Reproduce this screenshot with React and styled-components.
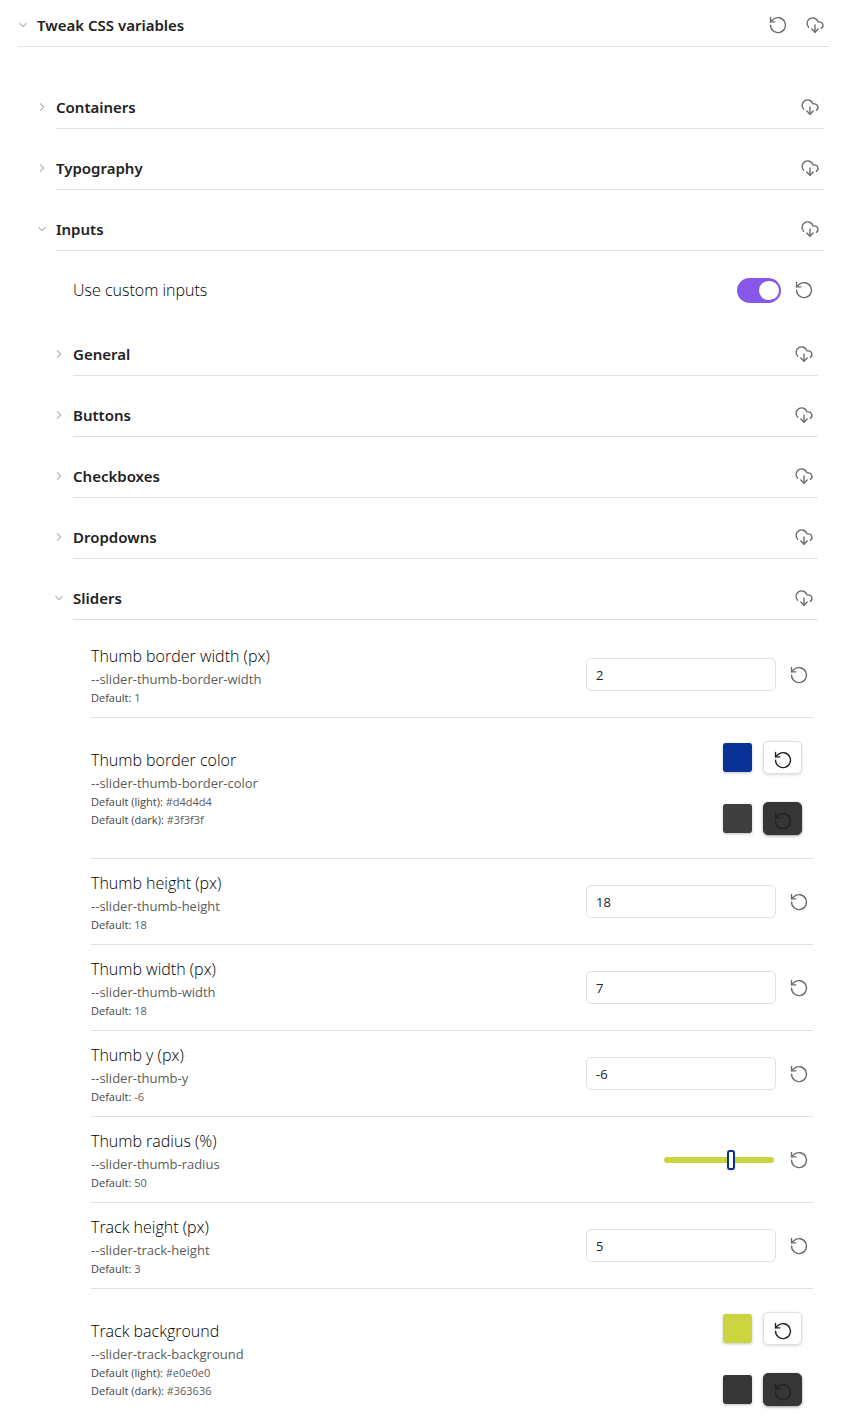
import React, { useState } from "react";
import styled, { createGlobalStyle, css } from "styled-components";
import { ChevronDown, ChevronRight } from "lucide-react";

const GlobalStyle = createGlobalStyle`
  *, *::before, *::after { box-sizing: border-box; }
  body {
    margin: 0;
    background: #fff;
    color: #222;
    font-family: "Open Sans", "Noto Sans", sans-serif;
    font-size: 16px;
    line-height: 20px;
  }
`;

const Page = styled.main`
  padding: 5px 21px 3px 18px;
`;

const Heading = styled.div`
  display: flex;
  align-items: center;
  justify-content: space-between;
  height: ${(p) => (p.$top ? 42 : 41)}px;
  margin-left: ${(p) => (p.$top ? 0 : 18)}px;
  padding: 0 4px 2px 0;
  border-bottom: 1px solid #e0e0e0;
  & + & { margin-top: 20px; }
`;

const Toggle = styled.button`
  display: flex;
  align-items: center;
  gap: 9px;
  margin: 0 0 0 ${(p) => (p.$top ? 0 : -19)}px;
  padding: 0;
  border: 0;
  background: none;
  color: #222;
  font: inherit;
  font-family: "Noto Sans", "Open Sans", sans-serif;
  font-size: 15px;
  font-weight: 600;
  svg { color: #b4b4b4; flex: none; }
`;

const Actions = styled.div`
  display: flex;
  align-items: center;
  gap: 17px;
`;

const IconButton = styled.button`
  display: flex;
  padding: 0;
  border: 0;
  background: none;
  color: #6c6c6c;
`;

const Group = styled.section`
  padding: ${(p) => p.$top || 0}px ${(p) => (p.$deep ? 6 : 5)}px 0 ${(p) => (p.$deep ? 17 : 20)}px;
`;

const SwitchRow = styled.div`
  display: flex;
  align-items: center;
  justify-content: space-between;
  height: 84px;
  padding: 0 10px 6px 35px;
`;

const Controls = styled.div`
  display: flex;
  align-items: center;
  gap: 13px;
`;

const Switch = styled.input`
  appearance: none;
  width: 44px;
  height: 25px;
  margin: 0;
  padding: 3px 2px;
  border-radius: 13px;
  background: ${(p) => (p.checked ? "#8758e8" : "#d4d4d4")};
  &::before {
    content: "";
    display: block;
    width: 20px;
    height: 19px;
    border-radius: 10px;
    background: #fff;
    margin-left: ${(p) => (p.checked ? 20 : 0)}px;
  }
`;

const Settings = styled.div`
  padding: 12px 5px 0 36px;
`;

const Setting = styled.div`
  display: flex;
  align-items: center;
  justify-content: space-between;
  min-height: ${(p) => (p.$color ? 141 : 86)}px;
  padding-right: 4px;
  border-bottom: 1px solid #e0e0e0;
  ${(p) => p.$color && css`padding-right: 11px;`}
  &:last-child { border-color: transparent; }
`;

const Info = styled.div`
  display: flex;
  flex-direction: column;
`;

const Name = styled.label`
  color: #000;
  font-weight: 300;
  line-height: 26px;
`;

const Variable = styled.span`
  color: #5c5c5c;
  font-size: 13px;
  line-height: 20px;
`;

const Default = styled.span`
  color: #5c5c5c;
  font-size: 11px;
  line-height: 18px;
  b { font-weight: 400; color: #444; }
`;

const NumberBox = styled.input`
  width: 190px;
  height: 33px;
  padding: 0 9px;
  border: 1px solid #e0e0e0;
  border-radius: 5px;
  background: #fff;
  color: #222;
  font: inherit;
  font-size: 13px;
`;

const Range = styled.input`
  appearance: none;
  width: 110px;
  height: 6px;
  margin: 0 2px 0 0;
  border-radius: 3px;
  background: #cbd53f;
  &::-webkit-slider-thumb {
    appearance: none;
    width: 8px;
    height: 20px;
    border: 2px solid #0a3196;
    border-radius: 3px;
    background: #fff;
    box-shadow: 0 1px 2px rgba(0, 0, 0, 0.15);
  }
`;

const Swatches = styled.div`
  display: flex;
  flex-direction: column;
  gap: 28px;
`;

const SwatchRow = styled.div`
  display: flex;
  align-items: center;
  gap: 11px;
`;

const Swatch = styled.input`
  appearance: none;
  width: 29px;
  height: 29px;
  padding: 0;
  border: 0;
  border-radius: 2px;
  background: none;
  box-shadow: 0 1px 3px rgba(0, 0, 0, 0.25);
  &::-webkit-color-swatch-wrapper { padding: 0; }
  &::-webkit-color-swatch { border: 0; border-radius: 2px; }
`;

const ResetBox = styled.button`
  display: flex;
  align-items: flex-end;
  justify-content: center;
  width: 39px;
  height: 33px;
  padding: 0 0 3px;
  border: 1px solid ${(p) => (p.$dark ? "#363636" : "#e0e0e0")};
  border-radius: 5px;
  background: ${(p) => (p.$dark ? "#363636" : "#fff")};
  color: #222;
  box-shadow: 0 1px 3px rgba(0, 0, 0, ${(p) => (p.$dark ? 0.4 : 0.15)});
`;

const Icon = ({ children }) => (
  <svg width="20" height="20" viewBox="-0.6 -0.6 25.2 25.2" fill="none" stroke="currentColor" strokeWidth="1.75" strokeLinecap="round" strokeLinejoin="round" aria-hidden="true">
    {children}
  </svg>
);

const ResetIcon = () => (
  <Icon>
    <path d="M2.6 12.2a9.4 9.4 0 1 0 3.1-7L2.6 8" />
    <path d="M2.6 2.6V8H8" />
  </Icon>
);

const CloudIcon = () => (
  <Icon>
    <path d="M4 14.899A7 7 0 1 1 15.71 8h1.79a4.5 4.5 0 0 1 2.5 8.242" />
    <path d="M12 12v9" />
    <path d="m8 17 4 4 4-4" />
  </Icon>
);

const Reset = ({ name }) => (
  <IconButton aria-label={`Restore default: ${name}`}><ResetIcon /></IconButton>
);

const Section = ({ title, open, top, reset }) => (
  <Heading $top={top}>
    <Toggle $top={top} aria-expanded={!!open}>
      {open ? <ChevronDown size={10} strokeWidth={2} viewBox="3 3 18 18" /> : <ChevronRight size={10} strokeWidth={2} viewBox="3 3 18 18" />}
      {title}
    </Toggle>
    <Actions>
      {reset && <Reset name={title} />}
      <IconButton aria-label={`Export ${title}`}><CloudIcon /></IconButton>
    </Actions>
  </Heading>
);

const settings = [
  { name: "Thumb border width (px)", id: "slider-thumb-border-width", fallback: "1", value: "2" },
  { name: "Thumb border color", id: "slider-thumb-border-color", light: "#d4d4d4", dark: "#3f3f3f", colors: ["#0a3196", "#3f3f3f"] },
  { name: "Thumb height (px)", id: "slider-thumb-height", fallback: "18", value: "18" },
  { name: "Thumb width (px)", id: "slider-thumb-width", fallback: "18", value: "7" },
  { name: "Thumb y (px)", id: "slider-thumb-y", fallback: "-6", value: "-6" },
  { name: "Thumb radius (%)", id: "slider-thumb-radius", fallback: "50", range: 62 },
  { name: "Track height (px)", id: "slider-track-height", fallback: "3", value: "5" },
  { name: "Track background", id: "slider-track-background", light: "#e0e0e0", dark: "#363636", colors: ["#cbd53f", "#363636"] },
];

const SettingRow = ({ item }) => (
  <Setting $color={!!item.colors}>
    <Info>
      <Name htmlFor={item.id}>{item.name}</Name>
      <Variable>--{item.id}</Variable>
      {item.colors ? (
        <>
          <Default><b>Default (light):</b> {item.light}</Default>
          <Default><b>Default (dark):</b> {item.dark}</Default>
        </>
      ) : (
        <Default><b>Default:</b> {item.fallback}</Default>
      )}
    </Info>
    {item.colors ? (
      <Swatches>
        {item.colors.map((color, i) => (
          <SwatchRow key={color}>
            <Swatch type="color" id={i ? `${item.id}-dark` : item.id} aria-label={`${item.name} ${i ? "dark" : "light"}`} defaultValue={color} />
            <ResetBox $dark={i === 1} aria-label={`Restore default: ${item.name}`}><ResetIcon /></ResetBox>
          </SwatchRow>
        ))}
      </Swatches>
    ) : (
      <Controls>
        {item.range ? (
          <Range type="range" id={item.id} min="0" max="100" defaultValue={item.range} />
        ) : (
          <NumberBox type="text" inputMode="numeric" id={item.id} defaultValue={item.value} />
        )}
        <Reset name={item.name} />
      </Controls>
    )}
  </Setting>
);

export default function App() {
  const [custom, setCustom] = useState(true);
  return (
    <>
      <GlobalStyle />
      <Page>
        <Section title="Tweak CSS variables" open top reset />
        <Group $top={41}>
          <Section title="Containers" />
          <Section title="Typography" />
          <Section title="Inputs" open />
          <SwitchRow>
            <Name htmlFor="custom-inputs">Use custom inputs</Name>
            <Controls>
              <Switch type="checkbox" role="switch" id="custom-inputs" checked={custom} onChange={(e) => setCustom(e.target.checked)} />
              <Reset name="Use custom inputs" />
            </Controls>
          </SwitchRow>
          <Group $deep>
            <Section title="General" />
            <Section title="Buttons" />
            <Section title="Checkboxes" />
            <Section title="Dropdowns" />
            <Section title="Sliders" open />
            <Settings>
              {settings.map((item) => <SettingRow key={item.id} item={item} />)}
            </Settings>
          </Group>
        </Group>
      </Page>
    </>
  );
}
